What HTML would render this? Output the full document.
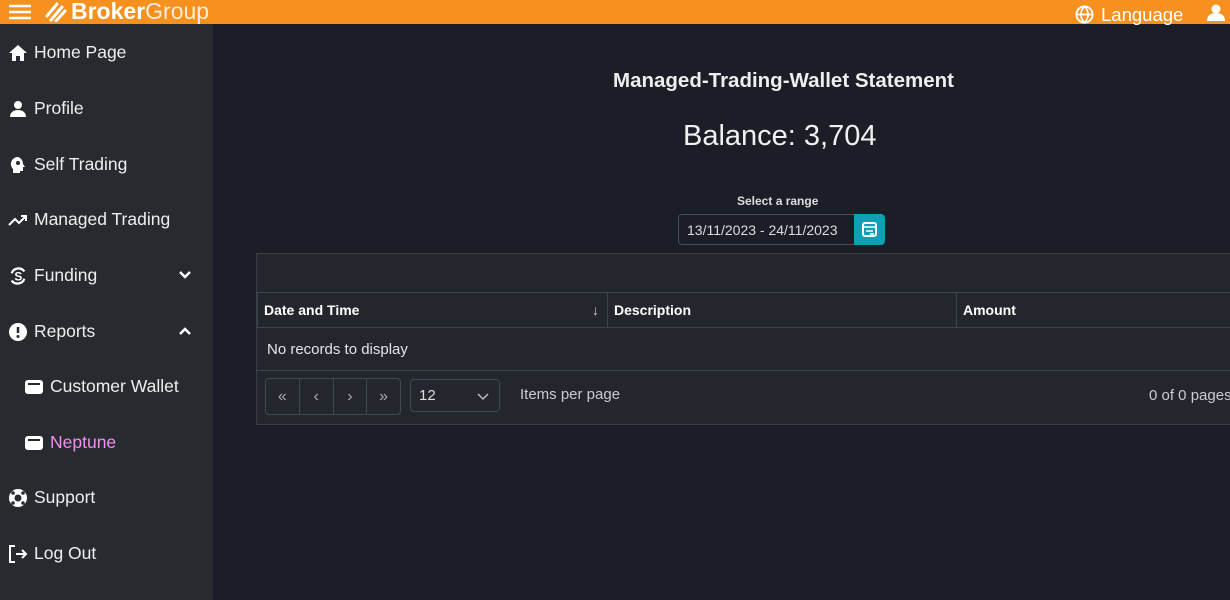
<!DOCTYPE html><html><head><style>
*{margin:0;padding:0;box-sizing:border-box}
body{width:1230px;height:600px;overflow:hidden;background:#1b1e27;font-family:"Liberation Sans",sans-serif;color:#fff;position:relative}
.top{position:absolute;left:0;top:0;width:1230px;height:24px;background:#f6901e}
.side{position:absolute;left:0;top:24px;width:213px;height:576px;background:#272b30}
.item{position:absolute;left:8px;font-size:17.5px;color:#eee;display:flex;align-items:center;gap:6px}
.item svg{width:20px;height:20px}
.abs{position:absolute}
.tbl{position:absolute;left:256px;top:253px;width:980px;height:172px;background:#23272d;border:1px solid #3a3e44}
.cell{position:absolute;border:1px solid #3f434a;font-weight:bold;font-size:14px;padding:9px 6px;height:36px}
.pg{position:absolute;border:1px solid #43474e;border-radius:4px;height:37px;color:#aaa;font-size:16px}
</style></head><body>
<div class="top">
<svg class="abs" style="left:8px;top:3px" width="24" height="18"><path d="M1 3h22M1 9h22M1 15h22" stroke="#fff" stroke-width="2.5"/></svg>
<svg class="abs" style="left:45px;top:2px" width="22" height="20"><path d="M2 14L12 2M6 18L17 5M11 19L20 9" stroke="#fff" stroke-width="3" stroke-linecap="round"/></svg>
<div class="abs" style="left:71px;top:-2px;font-size:23px;color:#fff"><b>Broker</b><span style="opacity:.85">Group</span></div>
<svg class="abs" style="left:1075px;top:5px" width="19" height="19" viewBox="0 0 20 20"><circle cx="10" cy="10" r="8.5" fill="none" stroke="#fff" stroke-width="2"/><path d="M1.5 10h17M10 1.5c-5 5-5 12 0 17M10 1.5c5 5 5 12 0 17" fill="none" stroke="#fff" stroke-width="1.8"/></svg>
<div class="abs" style="left:1101px;top:4px;font-size:18.5px;color:#fff">Language</div>
<svg class="abs" style="left:1207px;top:4px" width="18" height="17"><circle cx="9" cy="5" r="4.5" fill="#fff"/><path d="M0 17c0-6 4-8 9-8s9 2 9 8z" fill="#fff"/></svg>
</div>
<div class="side">
<div class="item" style="top:18px"><svg viewBox="0 0 20 20"><path d="M10 2L1 10h3v8h4v-5h4v5h4v-8h3z" fill="#fff"/></svg>Home Page</div>
<div class="item" style="top:74px"><svg viewBox="0 0 20 20"><circle cx="10" cy="6" r="4" fill="#fff"/><path d="M2 18c0-5 4-7 8-7s8 2 8 7z" fill="#fff"/></svg>Profile</div>
<div class="item" style="top:130px"><svg viewBox="0 0 20 20"><path d="M10 2a7 7 0 0 0-5 12v4h7v-2h3v-4h2l-2-3a7 7 0 0 0-5-7z" fill="#fff"/><circle cx="10" cy="8" r="2" fill="#272b30"/></svg>Self Trading</div>
<div class="item" style="top:185px"><svg viewBox="0 0 20 20"><path d="M1 15l6-6 4 4 7-7M13 6h5v5" fill="none" stroke="#fff" stroke-width="2"/></svg>Managed Trading</div>
<div class="item" style="top:241px"><svg viewBox="0 0 22 22"><path d="M4 8a8 8 0 0 1 14-2M18 14a8 8 0 0 1-14 2" fill="none" stroke="#fff" stroke-width="2.5"/><text x="7" y="16" font-size="13" font-weight="bold" fill="#fff" font-family="Liberation Sans">S</text></svg>Funding</div>
<svg class="abs" style="left:178px;top:246px" width="14" height="10"><path d="M2 2l5 5 5-5" fill="none" stroke="#fff" stroke-width="2.5"/></svg>
<div class="item" style="top:297px"><svg viewBox="0 0 20 20"><circle cx="10" cy="10" r="9" fill="#fff"/><path d="M10 5v6" stroke="#272b30" stroke-width="2.5"/><circle cx="10" cy="14.5" r="1.5" fill="#272b30"/></svg>Reports</div>
<svg class="abs" style="left:178px;top:302px" width="14" height="10"><path d="M2 8l5-5 5 5" fill="none" stroke="#fff" stroke-width="2.5"/></svg>
<div class="item" style="left:24px;top:352px"><svg viewBox="0 0 20 20"><rect x="1" y="3" width="18" height="14" rx="3" fill="#fff"/><path d="M4 7h12" stroke="#272b30" stroke-width="2"/></svg>Customer Wallet</div>
<div class="item" style="left:24px;top:408px;color:#f28ef0"><svg viewBox="0 0 20 20"><rect x="1" y="3" width="18" height="14" rx="3" fill="#fff"/><path d="M4 7h12" stroke="#272b30" stroke-width="2"/></svg>Neptune</div>
<div class="item" style="top:463px"><svg viewBox="0 0 20 20"><circle cx="10" cy="10" r="9" fill="#fff"/><circle cx="10" cy="10" r="3.5" fill="#272b30"/><circle cx="5" cy="5" r="1.8" fill="#272b30"/><circle cx="15" cy="5" r="1.8" fill="#272b30"/><circle cx="5" cy="15" r="1.8" fill="#272b30"/><circle cx="15" cy="15" r="1.8" fill="#272b30"/></svg>Support</div>
<div class="item" style="top:519px"><svg viewBox="0 0 20 20"><path d="M7 2H2v16h5M8 10h10M14 6l4 4-4 4" fill="none" stroke="#fff" stroke-width="2"/></svg>Log Out</div>
</div>
<div class="abs" style="left:613px;top:69px;font-size:20.5px;font-weight:bold;color:#eee">Managed-Trading-Wallet Statement</div>
<div class="abs" style="left:683px;top:120px;font-size:29px;color:#f0f0f0">Balance: 3,704</div>
<div class="abs" style="left:737px;top:194px;font-size:12px;font-weight:bold;color:#ddd">Select a range</div>
<div class="abs" style="left:678px;top:214px;width:178px;height:31px;background:#1b1e27;border:1px solid #4a4e55;border-radius:4px 0 0 4px;font-size:14px;color:#ddd;padding:7px 8px">13/11/2023 - 24/11/2023</div>
<div class="abs" style="left:854px;top:214px;width:31px;height:31px;background:#10a0b5;border-radius:0 4px 4px 0"><svg style="margin:8px" width="15" height="15"><rect x="1" y="1" width="13" height="13" rx="2" fill="none" stroke="#fff" stroke-width="2"/><path d="M1 5h13M4 9h7M8 12h4" stroke="#fff" stroke-width="1.6"/></svg></div>
<div class="tbl">
<div class="cell" style="left:0;top:38px;width:351px">Date and Time<span style="position:absolute;right:8px;font-weight:normal;color:#ccc">↓</span></div>
<div class="cell" style="left:350px;top:38px;width:350px">Description</div>
<div class="cell" style="left:699px;top:38px;width:290px">Amount</div>
<div class="abs" style="left:10px;top:87px;font-size:15px;color:#e5e5e5">No records to display</div>
<div class="abs" style="left:0;top:116px;width:990px;border-top:1px solid #3f434a"></div>
<div class="pg" style="left:8px;top:124px;width:136px;display:flex">
<span style="flex:1;border-right:1px solid #43474e;text-align:center;line-height:35px">«</span><span style="flex:1;border-right:1px solid #43474e;text-align:center;line-height:35px">‹</span><span style="flex:1;border-right:1px solid #43474e;text-align:center;line-height:35px">›</span><span style="flex:1;text-align:center;line-height:35px">»</span></div>
<div class="pg" style="left:153px;top:125px;width:90px;height:33px;color:#ddd;font-size:15px;padding:7px 8px">12<svg style="position:absolute;right:10px;top:13px" width="12" height="8"><path d="M1 1l5 5 5-5" fill="none" stroke="#bbb" stroke-width="1.5"/></svg></div>
<div class="abs" style="left:263px;top:132px;font-size:15px;color:#ccc">Items per page</div>
<div class="abs" style="left:892px;top:133px;font-size:15px;color:#ccc">0 of 0 pages</div>
</div>
</body></html>
